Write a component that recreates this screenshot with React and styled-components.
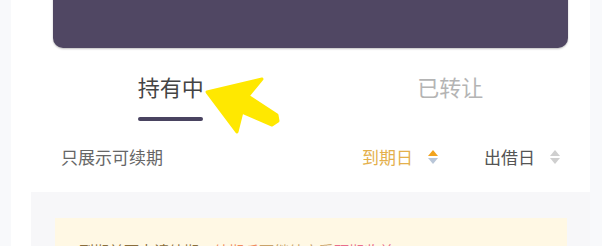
import styled, { createGlobalStyle } from 'styled-components'

const GlobalStyle = createGlobalStyle`
  html, body {
    margin: 0;
    padding: 0;
    background: #f8f9fb;
    font-family: "Noto Sans CJK SC", "Noto Sans", sans-serif;
    overflow: hidden;
  }
`

const Page = styled.div`
  width: 602px;
  height: 246px;
  overflow: hidden;
  display: flex;
  background: #f8f9fb;
`

const Column = styled.div`
  margin-left: 11px;
  width: 579px;
  background: #fff;
  position: relative;
`

const Inner = styled.div`
  margin-left: 20px;
  display: flex;
  flex-direction: column;
`

const AssetCard = styled.div`
  margin: -22px 22px 0;
  height: 70px;
  flex-shrink: 0;
  background: #504763;
  border-radius: 0 0 10px 10px;
  box-shadow: 0 1px 2px rgba(0, 0, 0, 0.25);
  display: flex;
  padding: 0 20px;
  box-sizing: border-box;
`

const CardLabel = styled.div`
  font-size: 15px;
  line-height: 26px;
  color: #6d6680;
  width: ${p => p.w}px;
`

const Tabs = styled.div`
  display: flex;
  padding-top: 23px;
  height: 73px;
  flex-shrink: 0;
  box-sizing: border-box;
`

const Tab = styled.div`
  flex: 1;
  display: flex;
  flex-direction: column;
  align-items: center;
  font-size: 22px;
  line-height: 30px;
  color: ${p => (p.active ? '#444' : '#b4b4b4')};
`

const TabBar = styled.div`
  margin-top: 16px;
  width: 65px;
  height: 4px;
  border-radius: 2px;
  background: #494360;
`

const FilterRow = styled.div`
  height: 71px;
  flex-shrink: 0;
  padding: 0 30px;
  display: flex;
  align-items: center;
  justify-content: space-between;
`

const FilterText = styled.div`
  font-size: 17px;
  color: #666;
`

const Sorts = styled.div`
  display: flex;
  align-items: center;
  gap: 46px;
`

const SortItem = styled.div`
  display: flex;
  align-items: center;
  gap: 15px;
  font-size: 17px;
  color: ${p => (p.active ? '#e4b04c' : '#555')};
`

const Arrows = styled.div`
  display: flex;
  flex-direction: column;
  gap: 2px;
`

const Tri = styled.span`
  width: 0;
  height: 0;
  border-left: 5px solid transparent;
  border-right: 5px solid transparent;
  ${p => (p.down ? 'border-top' : 'border-bottom')}: 6px solid ${p => p.color};
`

const GraySection = styled.div`
  background: #f7f7f9;
  padding: 26px 23px 0 24px;
  height: 60px;
  flex-shrink: 0;
`

const Notice = styled.div`
  background: #fff8e4;
  height: 60px;
  padding: 23px 24px 0;
  box-sizing: border-box;
  font-size: 15px;
  line-height: 20px;
  color: #c9a36a;
`

const Hi = styled.span`
  color: ${p => p.c};
`

const Pointer = styled.svg`
  position: absolute;
  left: 0;
  top: 0;
  pointer-events: none;
`

function SortIcon({ up, down }) {
  return (
    <Arrows>
      <Tri color={up} />
      <Tri down color={down} />
    </Arrows>
  )
}

export default function App() {
  return (
    <Page>
      <GlobalStyle />
      <Column>
        <Inner>
          <AssetCard>
            <CardLabel w={200}>昨日收益</CardLabel>
            <CardLabel w={200}>累计收益(元)</CardLabel>
          </AssetCard>
          <Tabs>
            <Tab active>
              持有中
              <TabBar />
            </Tab>
            <Tab>已转让</Tab>
          </Tabs>
          <FilterRow>
            <FilterText>只展示可续期</FilterText>
            <Sorts>
              <SortItem active>
                到期日
                <SortIcon up="#f2a31d" down="#b9c6d8" />
              </SortItem>
              <SortItem>
                出借日
                <SortIcon up="#cfcfcf" down="#cfcfcf" />
              </SortItem>
            </Sorts>
          </FilterRow>
          <GraySection>
            <Notice>
              <Hi c="#8a6d3b">到期前可申请续期，</Hi>
              <Hi c="#f08a5d">续期后</Hi>可继续享受<Hi c="#e96d8a">预期收益</Hi>
            </Notice>
          </GraySection>
        </Inner>
        <Pointer width="579" height="246" viewBox="0 0 579 246">
          <polygon
            points="196,92 251,79 237,96 266,115 267,121 261,125 231,112 226,132"
            fill="#ffe800"
            stroke="#ffe800"
            strokeWidth="3"
            strokeLinejoin="round"
          />
        </Pointer>
      </Column>
    </Page>
  )
}
